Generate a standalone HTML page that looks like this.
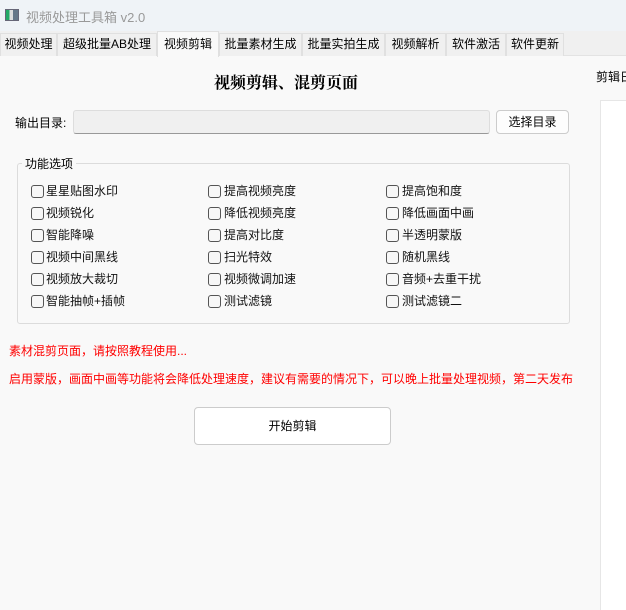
<!DOCTYPE html>
<html><head><meta charset="utf-8"><style>
*{margin:0;padding:0;box-sizing:border-box}
body{width:626px;height:602px;background:#f9f9f9;font-family:"Liberation Sans","Noto Sans CJK SC",sans-serif;font-size:12px;color:#000;position:relative;overflow:hidden}
.a{position:absolute;white-space:nowrap}
.tb{left:0;top:0;width:626px;height:31px;background:#eff3f7}
.tabs{left:0;top:31px;width:626px;height:25px;background:#f0f0f0;border-bottom:1px solid #e3e3e3}
.tab{position:absolute;top:2px;height:23px;border:1px solid #e0e0e0;border-bottom:none;background:#f0f0f0;line-height:21px;text-align:center;font-size:12px}
.sel{background:#f9f9f9;top:0;height:26px;line-height:25px}
.cb{position:absolute;width:13px;height:13px;border:1px solid #555;border-radius:3px;background:#f7f7f7}
.lbl{position:absolute;font-size:12px;line-height:14px;color:#111}
.red{color:#f00;font-size:12px}
</style></head><body>
<div class="a tb"></div>
<div class="a" style="left:5px;top:9px;width:14px;height:12px;border:1px solid #667;background:linear-gradient(90deg,#2a6 0 30%,#ddd 30% 60%,#678 60%)"></div>
<div class="a" style="left:26px;top:7px;font-size:13px;color:#999">视频处理工具箱 v2.0</div>
<div class="a tabs"></div>
<div class="tab" style="left:0;width:57px;top:33px">视频处理</div>
<div class="tab" style="left:57px;width:100px;top:33px">超级批量AB处理</div>
<div class="tab sel" style="left:157px;width:62px;top:31px">视频剪辑</div>
<div class="tab" style="left:219px;width:83px;top:33px">批量素材生成</div>
<div class="tab" style="left:302px;width:83px;top:33px">批量实拍生成</div>
<div class="tab" style="left:385px;width:61px;top:33px">视频解析</div>
<div class="tab" style="left:446px;width:60px;top:33px">软件激活</div>
<div class="tab" style="left:506px;width:58px;top:33px">软件更新</div>
<div class="a" style="left:214px;top:70px;font-family:'Liberation Serif','Noto Serif CJK SC',serif;font-weight:bold;font-size:16px">视频剪辑、混剪页面</div>
<div class="a" style="left:596px;top:68px;font-size:12px">剪辑日</div>
<div class="a" style="left:600px;top:100px;width:30px;height:510px;background:#fff;border-left:1px solid #e6e6e6;border-top:1px solid #e6e6e6"></div>
<div class="a" style="left:15px;top:114px">输出目录:</div>
<div class="a" style="left:73px;top:110px;width:417px;height:24px;background:#f0f0f0;border:1px solid #ddd;border-bottom:1px solid #999;border-radius:3px"></div>
<div class="a" style="left:496px;top:110px;width:73px;height:24px;background:#fdfdfd;border:1px solid #ccc;border-radius:4px;text-align:center;line-height:22px">选择目录</div>
<div class="a" style="left:17px;top:163px;width:553px;height:161px;border:1px solid #dcdcdc;border-radius:3px"></div>
<div class="a" style="left:22px;top:155px;background:#f9f9f9;padding:0 3px">功能选项</div>
<div class="cb" style="left:31px;top:185px"></div><div class="lbl" style="left:46px;top:184px">星星贴图水印</div>
<div class="cb" style="left:31px;top:207px"></div><div class="lbl" style="left:46px;top:206px">视频锐化</div>
<div class="cb" style="left:31px;top:229px"></div><div class="lbl" style="left:46px;top:228px">智能降噪</div>
<div class="cb" style="left:31px;top:251px"></div><div class="lbl" style="left:46px;top:250px">视频中间黑线</div>
<div class="cb" style="left:31px;top:273px"></div><div class="lbl" style="left:46px;top:272px">视频放大裁切</div>
<div class="cb" style="left:31px;top:295px"></div><div class="lbl" style="left:46px;top:294px">智能抽帧+插帧</div>
<div class="cb" style="left:208px;top:185px"></div><div class="lbl" style="left:224px;top:184px">提高视频亮度</div>
<div class="cb" style="left:208px;top:207px"></div><div class="lbl" style="left:224px;top:206px">降低视频亮度</div>
<div class="cb" style="left:208px;top:229px"></div><div class="lbl" style="left:224px;top:228px">提高对比度</div>
<div class="cb" style="left:208px;top:251px"></div><div class="lbl" style="left:224px;top:250px">扫光特效</div>
<div class="cb" style="left:208px;top:273px"></div><div class="lbl" style="left:224px;top:272px">视频微调加速</div>
<div class="cb" style="left:208px;top:295px"></div><div class="lbl" style="left:224px;top:294px">测试滤镜</div>
<div class="cb" style="left:386px;top:185px"></div><div class="lbl" style="left:402px;top:184px">提高饱和度</div>
<div class="cb" style="left:386px;top:207px"></div><div class="lbl" style="left:402px;top:206px">降低画面中画</div>
<div class="cb" style="left:386px;top:229px"></div><div class="lbl" style="left:402px;top:228px">半透明蒙版</div>
<div class="cb" style="left:386px;top:251px"></div><div class="lbl" style="left:402px;top:250px">随机黑线</div>
<div class="cb" style="left:386px;top:273px"></div><div class="lbl" style="left:402px;top:272px">音频+去重干扰</div>
<div class="cb" style="left:386px;top:295px"></div><div class="lbl" style="left:402px;top:294px">测试滤镜二</div>
<div class="a red" style="left:9px;top:342px">素材混剪页面，请按照教程使用...</div>
<div class="a red" style="left:9px;top:370px">启用蒙版，画面中画等功能将会降低处理速度，建议有需要的情况下，可以晚上批量处理视频，第二天发布</div>
<div class="a" style="left:194px;top:407px;width:197px;height:38px;background:#fff;border:1px solid #ccc;border-radius:4px;text-align:center;line-height:36px">开始剪辑</div>
</body></html>
